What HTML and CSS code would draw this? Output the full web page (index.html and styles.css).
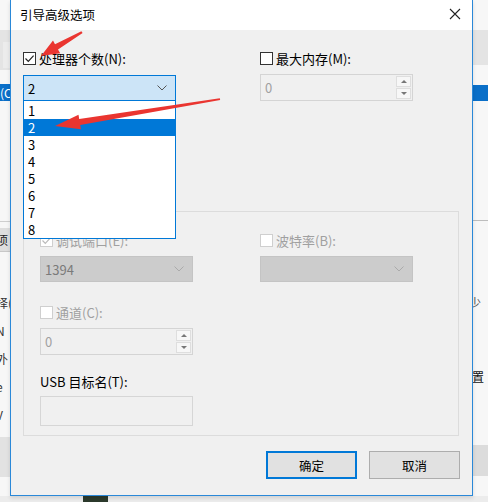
FILE: index.html
```html
<!DOCTYPE html>
<html lang="zh">
<head>
<meta charset="utf-8">
<link rel="stylesheet" href="styles.css">
</head>
<body>
<div class="desktop">
  <div class="bg bg-l1"></div>
  <div class="bg bg-l2"></div>
  <div class="bg bg-lblue"><span>(C</span></div>
  <div class="bg bg-lline"></div>
  <div class="bg bg-l3"><span>项</span></div>
  <div class="bg bg-ltext">
    <span>择(</span><span>N</span><span>外</span><span>e</span><span>V</span>
  </div>
  <div class="bg bg-l4"></div>
  <div class="bg bg-r1"></div>
  <div class="bg bg-rblue"></div>
  <div class="bg bg-rline"></div>
  <div class="bg bg-rt1">少</div>
  <div class="bg bg-rt2">置</div>
  <div class="bg bg-r2"></div>
  <div class="bg bg-bottom"></div>
  <div class="bg bg-dark"></div>

  <div class="dialog">
    <div class="titlebar">
      <span class="title">引导高级选项</span>
      <svg class="close" width="12" height="12" viewBox="0 0 12 12"><path d="M1 1 L11 11 M11 1 L1 11" stroke="#222" stroke-width="1.1" fill="none"/></svg>
    </div>
    <div class="client">
      <div class="top-grid">
        <div class="cell">
          <label class="check-row">
            <span class="cb cb-on"><svg width="11" height="11" viewBox="0 0 11 11"><path d="M1.5 5.5 L4.3 8.3 L9.6 2.6" stroke="#222" stroke-width="1.2" fill="none"/></svg></span>
            <span>处理器个数(N):</span>
          </label>
          <div class="combo combo-active">
            <span>2</span>
            <svg class="chev" width="10" height="6" viewBox="0 0 10 6"><path d="M0.5 0.5 L5 5 L9.5 0.5" stroke="#555" stroke-width="1" fill="none"/></svg>
            <ul class="droplist">
              <li>1</li><li class="sel">2</li><li>3</li><li>4</li><li>5</li><li>6</li><li>7</li><li>8</li>
            </ul>
          </div>
        </div>
        <div class="cell">
          <label class="check-row">
            <span class="cb"></span>
            <span>最大内存(M):</span>
          </label>
          <div class="spin spin-top">
            <span class="val">0</span>
            <div class="spin-btns">
              <span class="sbtn"><i class="tri up"></i></span>
              <span class="sbtn"><i class="tri down"></i></span>
            </div>
          </div>
        </div>
      </div>

      <div class="group">
        <div class="g-grid">
          <div class="cell">
            <label class="check-row dis">
              <span class="cb cb-dis"><svg width="11" height="11" viewBox="0 0 11 11"><path d="M1.5 5.5 L4.3 8.3 L9.6 2.6" stroke="#bbb" stroke-width="1.2" fill="none"/></svg></span>
              <span>调试端口(E):</span>
            </label>
            <div class="combo combo-dis">
              <span>1394</span>
              <svg class="chev" width="10" height="6" viewBox="0 0 10 6"><path d="M0.5 0.5 L5 5 L9.5 0.5" stroke="#aaa" stroke-width="1" fill="none"/></svg>
            </div>
          </div>
          <div class="cell">
            <label class="check-row dis">
              <span class="cb cb-dis"></span>
              <span>波特率(B):</span>
            </label>
            <div class="combo combo-dis">
              <span></span>
              <svg class="chev" width="10" height="6" viewBox="0 0 10 6"><path d="M0.5 0.5 L5 5 L9.5 0.5" stroke="#aaa" stroke-width="1" fill="none"/></svg>
            </div>
          </div>
        </div>
        <div class="cell row2">
          <label class="check-row dis">
            <span class="cb cb-dis"></span>
            <span>通道(C):</span>
          </label>
          <div class="spin spin-g">
            <span class="val">0</span>
            <div class="spin-btns">
              <span class="sbtn"><i class="tri up"></i></span>
              <span class="sbtn"><i class="tri down"></i></span>
            </div>
          </div>
        </div>
        <div class="cell row3">
          <div class="usb-label">USB 目标名(T):</div>
          <div class="textbox"></div>
        </div>
      </div>

      <div class="buttons">
        <button class="btn btn-default">确定</button>
        <button class="btn">取消</button>
      </div>
    </div>
  </div>

  <svg class="arrows" width="488" height="502" viewBox="0 0 488 502">
    <polygon fill="#ea3530" points="82.6,33 58,49.6 60.2,53.2 41,56 53,40.6 55,44.2 81.4,31.2"/>
    <polygon fill="#ea3530" points="220.2,100 80.2,125 80.9,129.2 55,126 78.5,114.8 79.2,119 219.8,98.2"/>
  </svg>
</div>
</body>
</html>
```

FILE: styles.css
```css
* { box-sizing: border-box; }
html, body { margin: 0; padding: 0; }
body {
  width: 488px;
  height: 502px;
  overflow: hidden;
  font-family: "Noto Sans CJK SC", "Microsoft YaHei", sans-serif;
  font-size: 13px;
  color: #000;
}
.desktop {
  position: relative;
  width: 488px;
  height: 502px;
  background: #f7f7f7;
  overflow: hidden;
}
.bg { position: absolute; }
.bg-l1 { left: 0; top: 30px; width: 10px; height: 40px; background: #e4e4e4; }
.bg-l2 { left: 3px; top: 42px; width: 7px; height: 26px; background: #ececec; }
.bg-lblue { left: 0; top: 84px; width: 30px; height: 17px; background: #0a6fc8; color: #fff; }
.bg-lblue span { position: absolute; left: 0; top: 0; font-size: 12px; line-height: 17px; }
.bg-lline { left: 0; top: 221px; width: 10px; height: 1px; background: #cfcfcf; }
.bg-l3 { left: 0; top: 228px; width: 30px; height: 24px; background: #dedede; border-bottom: 1px solid #c8c8c8; }
.bg-l3 span { position: absolute; left: -4px; top: 3px; font-size: 12px; color: #222; }
.bg-ltext { left: -4px; top: 295px; width: 30px; height: 130px; display: flex; flex-direction: column; gap: 12px; color: #333; font-size: 12px; line-height: 16px; }
.bg-ltext span { display: block; }
.bg-l4 { left: 0; top: 437px; width: 10px; height: 40px; background: #e2e2e2; }
.bg-r1 { left: 472px; top: 30px; width: 16px; height: 35px; background: #e4e4e4; }
.bg-rblue { left: 472px; top: 85px; width: 16px; height: 16px; background: #0a6fc8; }
.bg-rline { left: 472px; top: 220px; width: 16px; height: 1px; background: #bdbdbd; }
.bg-rt1 { left: 469px; top: 294px; font-size: 12px; color: #555; }
.bg-rt2 { left: 472px; top: 368px; font-size: 12px; color: #111; }
.bg-r2 { left: 472px; top: 445px; width: 16px; height: 31px; background: #dcdcdc; }
.bg-bottom { left: 0; top: 496px; width: 488px; height: 6px; background: #ececec; }
.bg-dark { left: 83px; top: 496px; width: 25px; height: 6px; background: #2c3a2c; }

.dialog {
  position: absolute;
  left: 10px;
  top: 0;
  width: 463px;
  height: 496px;
  border: 1px solid #2a88d8;
  border-top: none;
  background: #f0f0f0;
  box-shadow: 0 2px 4px rgba(0,0,0,0.12);
}
.titlebar {
  height: 30px;
  background: #fff;
  display: flex;
  align-items: center;
  justify-content: space-between;
  padding: 0 11px 2px 9px;
}
.title { font-size: 12.5px; color: #000; }
.close { display: block; }

.client { padding: 21px 12px 0 12px; }
.cell { display: flex; flex-direction: column; }
.top-grid {
  display: grid;
  grid-template-columns: 153px 153px;
  column-gap: 84px;
}
.check-row {
  display: flex;
  align-items: center;
  height: 15px;
  line-height: 15px;
  gap: 3px;
  white-space: nowrap;
}
.check-row.dis { color: #a0a0a0; }
.cb {
  width: 13px;
  height: 13px;
  border: 1px solid #333;
  background: #fff;
  display: flex;
  align-items: center;
  justify-content: center;
  flex: none;
}
.cb-on { background: #fff; }
.cb-dis { border-color: #cfcfcf; }

.combo {
  position: relative;
  height: 26px;
  margin-top: 9px;
  display: flex;
  align-items: center;
  justify-content: space-between;
  padding: 0 8px 0 4px;
  font-size: 13px;
}
.combo-active { background: #cce4f7; border: 1px solid #0078d7; color: #000; }
.combo-dis { background: #cccccc; border: 1px solid #c4c4c4; color: #7a7a7a; margin-top: 8px; }
.chev { display: block; }

.droplist {
  position: absolute;
  left: -1px;
  top: 24px;
  width: 153px;
  margin: 0;
  padding: 1px 0 0 0;
  list-style: none;
  background: #fff;
  border: 1px solid #0078d7;
  z-index: 5;
}
.droplist li {
  height: 17px;
  line-height: 17px;
  padding-left: 4px;
  font-size: 13px;
  color: #000;
}
.droplist li.sel { background: #0078d7; color: #fff; }

.spin {
  position: relative;
  height: 27px;
  background: #f0f0f0;
  border: 1px solid #d4d4d4;
  display: flex;
  align-items: center;
  justify-content: space-between;
  padding: 0 1px 0 4px;
  color: #a0a0a0;
  font-size: 13px;
}
.spin-top { margin-top: 8px; }
.spin-g { margin-top: 8px; }
.spin-btns {
  display: flex;
  flex-direction: column;
  gap: 1px;
  height: 23px;
}
.sbtn {
  width: 15px;
  height: 11px;
  background: #f7f7f7;
  border: 1px solid #dedede;
  display: flex;
  align-items: center;
  justify-content: center;
}
.tri { width: 0; height: 0; border-left: 3px solid transparent; border-right: 3px solid transparent; }
.tri.up { border-bottom: 3px solid #777; }
.tri.down { border-top: 3px solid #777; }

.group {
  margin-top: 110px;
  width: 436px;
  height: 225px;
  border: 1px solid #dcdcdc;
  padding: 21px 16px 0 16px;
}
.g-grid {
  display: grid;
  grid-template-columns: 153px 153px;
  column-gap: 67px;
}
.row2 { width: 153px; margin-top: 23px; }
.row3 { width: 153px; margin-top: 19px; }
.usb-label { height: 16px; line-height: 16px; color: #000; white-space: nowrap; }
.textbox {
  margin-top: 6px;
  height: 30px;
  background: #f0f0f0;
  border: 1px solid #d6d6d6;
}

.buttons {
  display: flex;
  justify-content: flex-end;
  gap: 12px;
  margin-top: 15px;
}
.btn {
  width: 91px;
  height: 28px;
  background: #e1e1e1;
  border: 1px solid #adadad;
  font-family: inherit;
  font-size: 12.5px;
  color: #000;
  padding: 0;
}
.btn-default { border: 2px solid #0078d7; }

.arrows { position: absolute; left: 0; top: 0; z-index: 10; pointer-events: none; }
```
